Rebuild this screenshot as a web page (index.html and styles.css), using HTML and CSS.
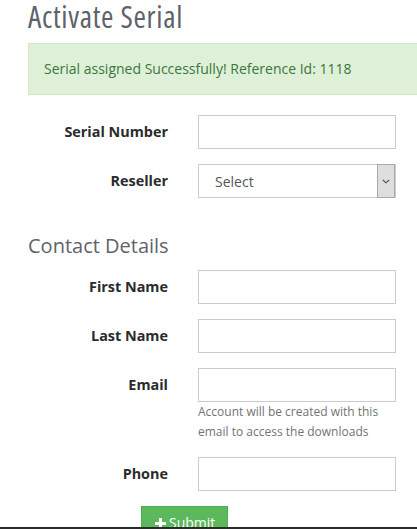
FILE: index.html
```html
<!DOCTYPE html>
<html lang="en">
<head>
    <meta charset="UTF-8">
    <meta name="viewport" content="width=device-width, initial-scale=1.0">
    <title>Activate Serial</title>
    <link rel="stylesheet" href="styles.css">
</head>

<body>
    <div class="container">
        <h1 class="page-title">Activate Serial</h1>

        <div class="alert alert-success">Serial assigned Successfully! Reference Id: 1118</div>

        <form class="form-horizontal">
            <div class="form-group">
                <label class="control-label">Serial Number</label>
                <div class="field"><input type="text" class="form-control"></div>
            </div>

            <div class="form-group">
                <label class="control-label">Reseller</label>
                <div class="field">
                    <div class="select-wrap">
                        <select class="form-control">
                            <option>Select</option>
                        </select>
                        <span class="select-arrow">
                            <svg width="8" height="5" viewBox="0 0 8 5"><path d="M0.8 0.8 L4 3.8 L7.2 0.8" fill="none" stroke="#444" stroke-width="1.1"/></svg>
                        </span>
                    </div>
                </div>
            </div>

            <h3 class="section-title">Contact Details</h3>

            <div class="form-group">
                <label class="control-label">First Name</label>
                <div class="field"><input type="text" class="form-control"></div>
            </div>

            <div class="form-group">
                <label class="control-label">Last Name</label>
                <div class="field"><input type="text" class="form-control"></div>
            </div>

            <div class="form-group">
                <label class="control-label">Email</label>
                <div class="field">
                    <input type="text" class="form-control">
                    <span class="help-block">Account will be created with this email to access the downloads</span>
                </div>
            </div>

            <div class="form-group">
                <label class="control-label">Phone</label>
                <div class="field"><input type="text" class="form-control"></div>
            </div>

            <div class="actions">
                <button type="button" class="btn btn-success">
                    <svg width="11" height="11" viewBox="0 0 11 11"><path d="M4 0h3v4h4v3H7v4H4V7H0V4h4z" fill="#fff"/></svg>
                    Submit
                </button>
            </div>
        </form>
    </div>

    <footer class="bottom-bar"></footer>
</body>
</html>
```

FILE: styles.css
```css
body {
    margin: 0;
    padding: 0;
    font-family: "Open Sans", "Liberation Sans", sans-serif;
    font-size: 14px;
    line-height: 20px;
    color: #333;
    background: #fff;
    overflow: hidden;
}

.container {
    padding-left: 28px;
}

.page-title {
    margin: 0 0 10px;
    font-size: 30px;
    font-weight: 400;
    font-stretch: 75%;
    letter-spacing: 0.7px;
    line-height: 33px;
    color: #5e6369;
}

.alert {
    margin-right: -30px;
    padding: 15px 15px;
    border: 1px solid #d6e9c6;
    border-radius: 0;
    background-color: #dff0d8;
    color: #3c763d;
}

.form-horizontal {
    margin-top: 20px;
}

.form-group {
    display: flex;
    align-items: flex-start;
    margin-bottom: 15px;
}

.control-label {
    width: 140px;
    flex-shrink: 0;
    padding-top: 7px;
    line-height: 20px;
    text-align: right;
    font-size: 14.4px;
    font-weight: 700;
    color: #2b2b2b;
}

.field {
    margin-left: 30px;
    width: 198px;
}

.form-control {
    display: block;
    box-sizing: border-box;
    width: 198px;
    height: 34px;
    margin: 0;
    padding: 6px 16px;
    border: 1px solid #ccc;
    border-radius: 0;
    background: #fff;
    font-family: inherit;
    font-size: 14px;
    color: #555;
}

select.form-control {
    -webkit-appearance: none;
    appearance: none;
}

.select-wrap {
    position: relative;
}

.select-arrow {
    position: absolute;
    top: 0;
    right: 1px;
    width: 16px;
    height: 32px;
    border: 1px solid #a9a9a9;
    background: #dedede;
    display: flex;
    align-items: center;
    justify-content: center;
    pointer-events: none;
}

.section-title {
    margin: 37px 0 13px;
    font-size: 20px;
    font-weight: 400;
    line-height: 22px;
    color: #5e6369;
}

.help-block {
    display: block;
    margin: 0;
    font-size: 12px;
    line-height: 20px;
    color: #737373;
}

.actions {
    padding-left: 113px;
}

.btn {
    display: inline-flex;
    align-items: center;
    gap: 3px;
    padding: 6px 12px 6px 13px;
    border: 1px solid #4cae4c;
    border-radius: 0;
    font-family: inherit;
    font-size: 14px;
    line-height: 20px;
    cursor: pointer;
}

.btn-success {
    background-color: #5cb85c;
    color: #fff;
}

.bottom-bar {
    position: fixed;
    left: 0;
    bottom: 0;
    width: 100%;
    height: 2px;
    background: #2b2b2b;
}
```
